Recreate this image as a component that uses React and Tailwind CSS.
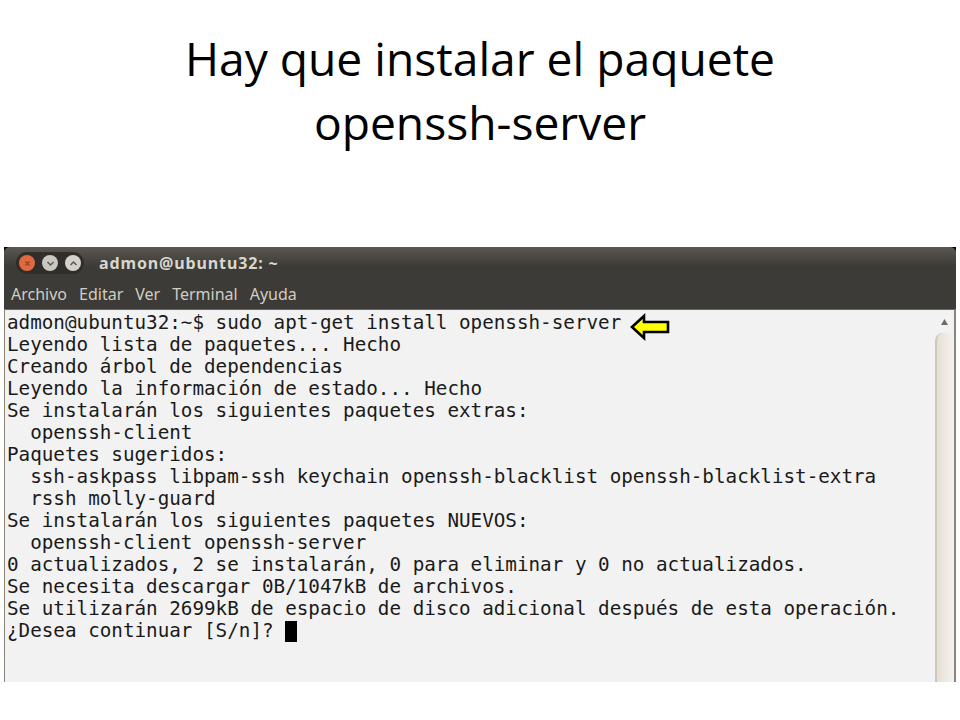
const lines = [
  "admon@ubuntu32:~$ sudo apt-get install openssh-server",
  "Leyendo lista de paquetes... Hecho",
  "Creando árbol de dependencias",
  "Leyendo la información de estado... Hecho",
  "Se instalarán los siguientes paquetes extras:",
  "  openssh-client",
  "Paquetes sugeridos:",
  "  ssh-askpass libpam-ssh keychain openssh-blacklist openssh-blacklist-extra",
  "  rssh molly-guard",
  "Se instalarán los siguientes paquetes NUEVOS:",
  "  openssh-client openssh-server",
  "0 actualizados, 2 se instalarán, 0 para eliminar y 0 no actualizados.",
  "Se necesita descargar 0B/1047kB de archivos.",
  "Se utilizarán 2699kB de espacio de disco adicional después de esta operación.",
];

function WinBtn({ bg, children }) {
  return (
    <span className={`flex h-[16px] w-[16px] items-center justify-center rounded-full ${bg}`}>
      <svg width="9" height="9" viewBox="0 0 9 9" fill="none" stroke="#5a5a52" strokeWidth="1.5">
        {children}
      </svg>
    </span>
  );
}

export default function App() {
  return (
    <div className="flex h-[720px] w-[960px] flex-col overflow-hidden bg-white">
      <h1 className="mt-[27px] h-[220px] text-center font-['Open_Sans',sans-serif] text-[46.2px] font-normal leading-[64px] text-black">
        Hay que instalar el paquete
        <br />
        openssh-server
      </h1>
      <div className="mx-1 h-[435px] bg-black">
        <div className="flex h-full flex-col overflow-hidden rounded-t-[6px] bg-[#3c3b37]">
          <div className="flex h-[32px] items-center bg-gradient-to-b from-[#5a5850] to-[#3c3b37] to-60% pl-[12px]">
            <div className="flex items-center gap-[7px] rounded-full bg-[#2f2e2b] px-[3px] py-[3px]">
              <WinBtn bg="bg-[#e0693f]">
                <path d="M2.5 2.5l4 4M6.5 2.5l-4 4" stroke="#9a4526" />
              </WinBtn>
              <WinBtn bg="bg-[#c9c7bf]">
                <path d="M1.5 3l3 3 3-3" />
              </WinBtn>
              <WinBtn bg="bg-[#d3d1c9]">
                <path d="M1.5 6l3-3 3 3" />
              </WinBtn>
            </div>
            <span className="ml-[15px] font-['Noto_Sans',sans-serif] text-[16px] font-bold tracking-[0.87px] text-[#d9d6cc]">
              admon@ubuntu32: ~
            </span>
          </div>
          <div className="flex h-[30px] items-center gap-[12px] pl-[7px] font-['Noto_Sans',sans-serif] text-[16px] text-[#d0cdc3]">
            <span>Archivo</span>
            <span>Editar</span>
            <span>Ver</span>
            <span>Terminal</span>
            <span>Ayuda</span>
          </div>
          <div className="flex min-h-0 flex-1 border-l border-r-2 border-t border-[#8a857a] border-t-[#6b675e] bg-[#f2f2f2]">
            <div className="relative min-w-0 flex-1 pl-[2px] pt-[2px] font-['DejaVu_Sans_Mono',monospace] text-[19.25px] leading-[22px] text-[#1a1a1a]">
              <pre className="font-['DejaVu_Sans_Mono',monospace]">{lines.join("\n")}</pre>
              <div className="flex items-center whitespace-pre">
                ¿Desea continuar [S/n]?{" "}
                <span className="inline-block h-[21px] w-[12px] bg-black" />
              </div>
              <svg className="absolute left-[625px] top-[3px]" width="42" height="28" viewBox="0 0 42 28">
                <path d="M2 14L14 3v6h24v10H14v6z" fill="#ffff00" stroke="#000" strokeWidth="2.6" />
              </svg>
            </div>
            <div className="flex w-[19px] shrink-0 flex-col items-center bg-[#f2f2f2]">
              <svg className="mt-[8px]" width="9" height="8" viewBox="0 0 9 8">
                <path d="M4.5 1L8 7H1z" fill="#6e6b62" />
              </svg>
              <div className="mt-[7px] w-full flex-1 rounded-t-[8px] border-l-2 border-[#cfc6b6] bg-gradient-to-r from-[#e6e0d5] to-[#f4f2ed]" />
            </div>
          </div>
        </div>
      </div>
    </div>
  );
}
